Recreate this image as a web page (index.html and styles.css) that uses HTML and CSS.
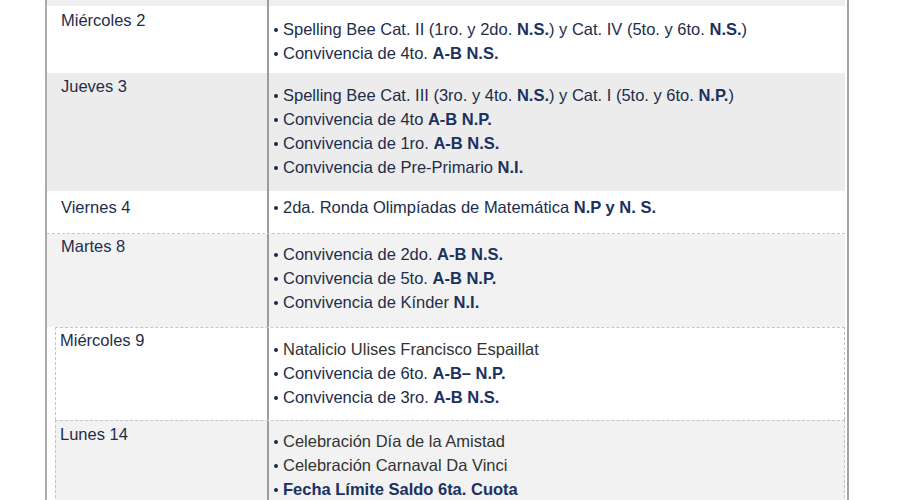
FILE: index.html
```html
<!DOCTYPE html>
<html lang="es">
<head>
<meta charset="utf-8">
<link rel="stylesheet" href="styles.css">
</head>
<body>
<div class="frame">
  <div class="row top"><div class="day"></div><div class="events"></div></div>

  <div class="row r1">
    <div class="day">Miércoles 2</div>
    <ul class="events">
      <li>Spelling Bee Cat. II (1ro. y 2do. <b>N.S.</b>) y Cat. IV (5to. y 6to. <b>N.S.</b>)</li>
      <li>Convivencia de 4to. <b>A-B N.S.</b></li>
    </ul>
  </div>

  <div class="row r2">
    <div class="day">Jueves 3</div>
    <ul class="events">
      <li>Spelling Bee Cat. III (3ro. y 4to. <b>N.S.</b>) y Cat. I (5to. y 6to. <b>N.P.</b>)</li>
      <li>Convivencia de 4to <b>A-B N.P.</b></li>
      <li>Convivencia de 1ro. <b>A-B N.S.</b></li>
      <li>Convivencia de Pre-Primario <b>N.I.</b></li>
    </ul>
  </div>

  <div class="row r3">
    <div class="day">Viernes 4</div>
    <ul class="events">
      <li>2da. Ronda Olimpíadas de Matemática <b>N.P y N. S.</b></li>
    </ul>
  </div>

  <div class="row r4">
    <div class="day">Martes 8</div>
    <ul class="events">
      <li>Convivencia de 2do. <b>A-B N.S.</b></li>
      <li>Convivencia de 5to. <b>A-B N.P.</b></li>
      <li>Convivencia de Kínder <b>N.I.</b></li>
    </ul>
  </div>

  <div class="row boxed r5">
    <div class="day">Miércoles 9</div>
    <ul class="events">
      <li class="plain">Natalicio Ulises Francisco Espaillat</li>
      <li>Convivencia de 6to. <b>A-B– N.P.</b></li>
      <li>Convivencia de 3ro. <b>A-B N.S.</b></li>
    </ul>
  </div>

  <div class="row boxed r6">
    <div class="day">Lunes 14</div>
    <ul class="events">
      <li class="plain">Celebración Día de la Amistad</li>
      <li class="plain">Celebración Carnaval Da Vinci</li>
      <li class="strong">Fecha Límite Saldo 6ta. Cuota</li>
    </ul>
  </div>
</div>
</body>
</html>
```

FILE: styles.css
```css
html, body {
  margin: 0;
  padding: 0;
  height: 500px;
  overflow: hidden;
  background: #ffffff;
}

body {
  font-family: "Liberation Sans", Arial, sans-serif;
  font-size: 16.5px;
  color: #1e2d4b;
}

.frame {
  margin-left: 45px;
  width: 800px;
  min-height: 600px;
  border-left: 2px solid #ababab;
  border-right: 2px solid #a2a2a2;
}

.row {
  display: grid;
  grid-template-columns: 220px 1fr;
  margin-right: 2px;
  align-items: stretch;
}

.day {
  padding-left: 14px;
  line-height: 24px;
}

.events {
  list-style: none;
  margin: 0;
  padding-left: 5px;
  border-left: 2px solid #9c9c9c;
  line-height: 24px;
}

.events li::before {
  content: "";
  display: inline-block;
  width: 4px;
  height: 4px;
  border-radius: 50%;
  background: #1b2a4a;
  margin-right: 5px;
  vertical-align: 3px;
}

.events b,
.events .strong {
  font-weight: bold;
  color: #1b3160;
}

.events .plain {
  color: #333333;
}

.top {
  height: 6px;
  background: #efefef;
}

.top .events { padding: 0; }

.r1 { background: #ffffff; }
.r1 .day { padding-top: 2px; }
.r1 .events { padding-top: 11px; padding-bottom: 8px; }

.r2 { background: #ececec; }
.r2 .day { padding-top: 1px; }
.r2 .events { padding-top: 10px; padding-bottom: 12px; }

.r3 {
  background: #ffffff;
  border-bottom: 1px dashed #c8c8c8;
}
.r3 .day { padding-top: 4px; }
.r3 .events { padding-top: 4px; padding-bottom: 14px; }

.r4 { background: #f2f2f2; }
.r4 .day { padding-top: 0; }
.r4 .events { padding-top: 8px; padding-bottom: 13px; }

.boxed {
  grid-template-columns: 211px 1fr;
  margin-left: 8px;
  border-top: 1px dashed #c4c4c4;
  border-left: 1px dashed #c4c4c4;
  border-right: 1px dashed #c4c4c4;
}

.boxed .day { padding-left: 4px; }

.r5 { background: #ffffff; }
.r5 .day { padding-top: 0; }
.r5 .events { padding-top: 9px; padding-bottom: 11px; }

.r6 { background: #f2f2f2; }
.r6 .day { padding-top: 1px; }
.r6 .events { padding-top: 8px; padding-bottom: 12px; }
```
